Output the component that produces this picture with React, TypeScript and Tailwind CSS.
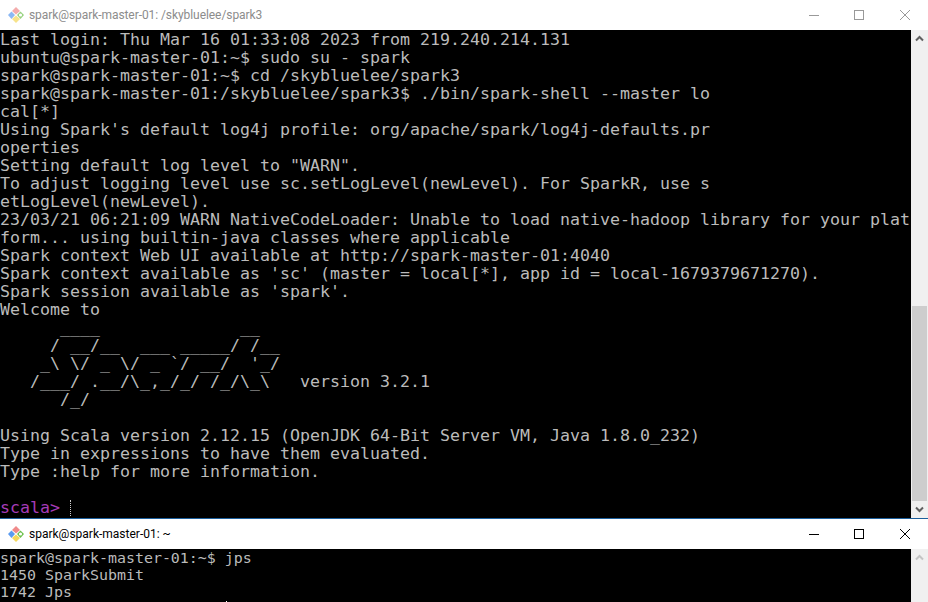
const topLines = [
  "Last login: Thu Mar 16 01:33:08 2023 from 219.240.214.131",
  "ubuntu@spark-master-01:~$ sudo su - spark",
  "spark@spark-master-01:~$ cd /skybluelee/spark3",
  "spark@spark-master-01:/skybluelee/spark3$ ./bin/spark-shell --master lo",
  "cal[*]",
  "Using Spark's default log4j profile: org/apache/spark/log4j-defaults.pr",
  "operties",
  'Setting default log level to "WARN".',
  "To adjust logging level use sc.setLogLevel(newLevel). For SparkR, use s",
  "etLogLevel(newLevel).",
  "23/03/21 06:21:09 WARN NativeCodeLoader: Unable to load native-hadoop library for your plat",
  "form... using builtin-java classes where applicable",
  "Spark context Web UI available at http://spark-master-01:4040",
  "Spark context available as 'sc' (master = local[*], app id = local-1679379671270).",
  "Spark session available as 'spark'.",
  "Welcome to",
  "      ____              __",
  "     / __/__  ___ _____/ /__",
  "    _\\ \\/ _ \\/ _ `/ __/  '_/",
  "   /___/ .__/\\_,_/_/ /_/\\_\\   version 3.2.1",
  "      /_/",
  " ",
  "Using Scala version 2.12.15 (OpenJDK 64-Bit Server VM, Java 1.8.0_232)",
  "Type in expressions to have them evaluated.",
  "Type :help for more information.",
  " ",
];

const bottomLines = ["spark@spark-master-01:~$ jps", "1450 SparkSubmit", "1742 Jps"];

function AppIcon({ dim }: { dim: boolean }) {
  return (
    <svg width="18" height="18" viewBox="0 0 18 18" className={dim ? "opacity-70" : ""}>
      <path d="M9 1 L13 5 L9 8.5 L5 5 Z" fill="#f08a8a" />
      <path d="M4.5 5.5 L8 9 L4.5 13 L1 9 Z" fill="#5b9bf0" />
      <path d="M13.5 5.5 L17 9 L13.5 13 L10 9 Z" fill="#6cc04a" />
      <path d="M9 9.5 L13 13 L9 17 L5 13 Z" fill="#f5d85a" />
      <circle cx="13.5" cy="9" r="1.6" fill="#ffffff" />
    </svg>
  );
}

function TitleBar({ title, active }: { title: string; active: boolean }) {
  const stroke = active ? "#000000" : "#999999";
  return (
    <div className="flex h-[30px] items-center bg-white">
      <div className="ml-[7px] flex w-[22px] items-center">
        <AppIcon dim={!active} />
      </div>
      <span
        className={`text-[12px] font-['Roboto',sans-serif] ${active ? "text-black" : "tracking-[-0.07px] text-[#8c8c8c]"}`}
      >
        {title}
      </span>
      <div className="ml-auto flex items-center">
        <svg width="12" height="12" viewBox="0 0 12 12" className="mr-[33px]">
          <line x1="1" y1="6.5" x2="11" y2="6.5" stroke={stroke} strokeWidth="1" />
        </svg>
        <svg width="12" height="12" viewBox="0 0 12 12" className="mr-[34px]">
          <rect x="1.5" y="1.5" width="9" height="9" fill="none" stroke={stroke} strokeWidth="1" />
        </svg>
        <svg width="12" height="12" viewBox="0 0 12 12" className="mr-[17px]">
          <path d="M1 1 L11 11 M11 1 L1 11" fill="none" stroke={stroke} strokeWidth="1" />
        </svg>
      </div>
    </div>
  );
}

function Chevron({ up, color }: { up: boolean; color: string }) {
  return (
    <svg width="9" height="7" viewBox="0 0 9 7">
      <path
        d={up ? "M1 5.5 L4.5 2 L8 5.5" : "M1 1.5 L4.5 5 L8 1.5"}
        fill="none"
        stroke={color}
        strokeWidth="2"
      />
    </svg>
  );
}

export default function App() {
  return (
    <div className="flex h-[602px] w-[928px] flex-col overflow-hidden bg-white">
      <TitleBar title="spark@spark-master-01: /skybluelee/spark3" active={false} />

      <div className="flex h-[488px]">
        <div className="w-[911px] overflow-hidden bg-black pt-px font-['DejaVu_Sans_Mono',monospace] text-[16.61px] leading-[18px] text-[#bbbbbb]">
          {topLines.map((line, i) => (
            <div key={i} className="h-[18px] whitespace-pre">
              {line}
            </div>
          ))}
          <div className="relative h-[18px] whitespace-pre text-[#a63cb8]">
            scala&gt;
            <span className="absolute left-[70px] top-[1px] h-[16px] w-px border-l border-dotted border-[#cccccc]" />
          </div>
        </div>
        <div className="flex w-[17px] flex-col bg-[#f0f0f0]">
          <div className="flex h-[17px] items-center justify-center">
            <Chevron up color="#606060" />
          </div>
          <div className="mx-px mt-[259px] h-[195px] bg-[#cdcdcd]" />
          <div className="mt-auto flex h-[17px] items-center justify-center">
            <Chevron up={false} color="#606060" />
          </div>
        </div>
      </div>

      <div className="h-px bg-[#1c5f9c]" />
      <TitleBar title="spark@spark-master-01: ~" active />

      <div className="flex flex-1">
        <div className="relative w-[911px] overflow-hidden bg-black pt-px font-['DejaVu_Sans_Mono',monospace] text-[14.95px] leading-[17px] text-[#bbbbbb]">
          {bottomLines.map((line, i) => (
            <div key={i} className="h-[17px] whitespace-pre">
              {line}
            </div>
          ))}
          <span className="absolute left-[226px] bottom-0 h-px w-px bg-white" />
        </div>
        <div className="flex w-[17px] flex-col items-center bg-[#f0f0f0] pt-[5px]">
          <Chevron up color="#c4c4c4" />
        </div>
      </div>
    </div>
  );
}
